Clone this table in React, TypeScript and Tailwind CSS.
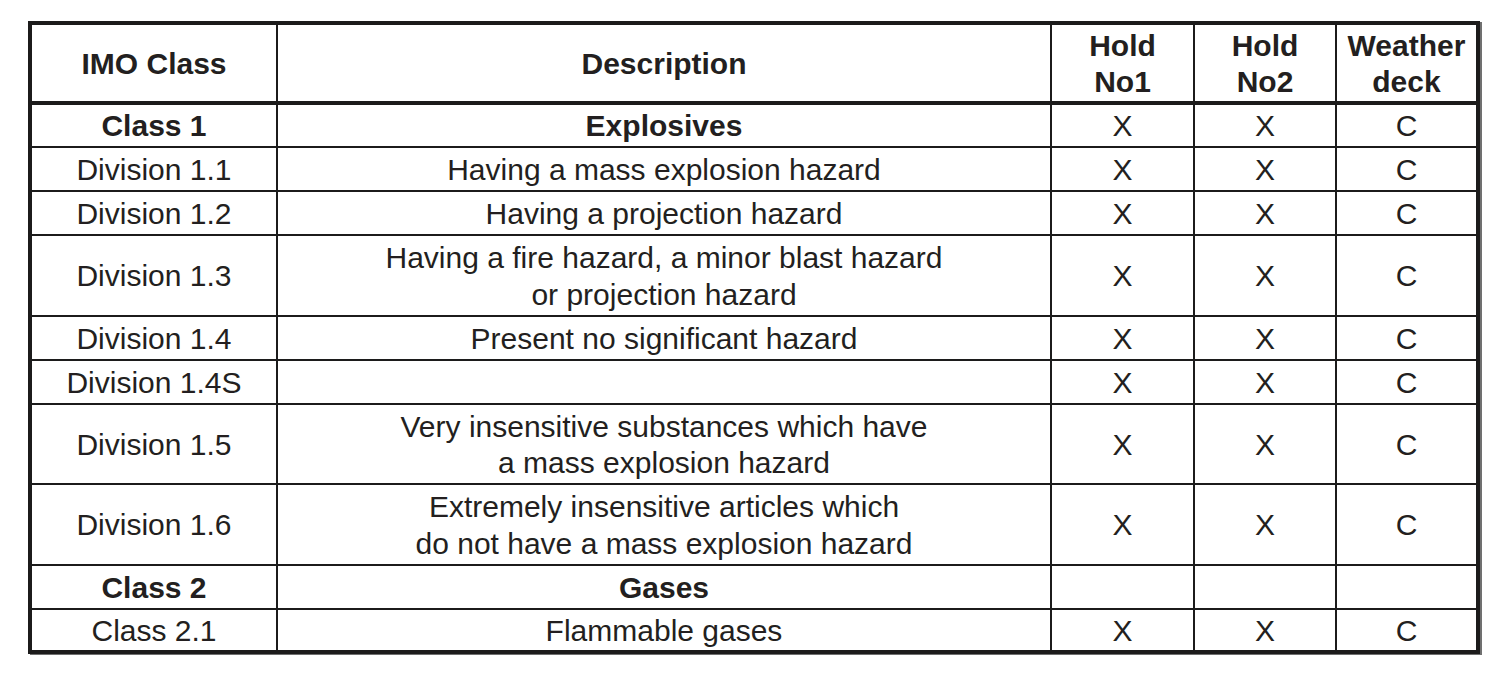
import React from "react";

type Row = { c1: string; c2: string[]; h1: string; h2: string; w: string; bold?: boolean };

const rows: Row[] = [
  { c1: "Class 1", c2: ["Explosives"], h1: "X", h2: "X", w: "C", bold: true },
  { c1: "Division 1.1", c2: ["Having a mass explosion hazard"], h1: "X", h2: "X", w: "C" },
  { c1: "Division 1.2", c2: ["Having a projection hazard"], h1: "X", h2: "X", w: "C" },
  { c1: "Division 1.3", c2: ["Having a fire hazard, a minor blast hazard", "or projection hazard"], h1: "X", h2: "X", w: "C" },
  { c1: "Division 1.4", c2: ["Present no significant hazard"], h1: "X", h2: "X", w: "C" },
  { c1: "Division 1.4S", c2: [], h1: "X", h2: "X", w: "C" },
  { c1: "Division 1.5", c2: ["Very insensitive substances which have", "a mass explosion hazard"], h1: "X", h2: "X", w: "C" },
  { c1: "Division 1.6", c2: ["Extremely insensitive articles which", "do not have a mass explosion hazard"], h1: "X", h2: "X", w: "C" },
  { c1: "Class 2", c2: ["Gases"], h1: "", h2: "", w: "", bold: true },
  { c1: "Class 2.1", c2: ["Flammable gases"], h1: "X", h2: "X", w: "C" },
];

function Cell({ children, bold }: { children?: React.ReactNode; bold?: boolean }) {
  return (
    <div
      className={`bg-white flex flex-col items-center justify-center text-center pt-[2px] leading-[36.5px] ${
        bold ? "font-bold" : "font-normal"
      }`}
    >
      {children}
    </div>
  );
}

export default function App() {
  return (
    <div
      className="min-h-[686px] w-[1500px] bg-white pt-[21px] pl-[28px] text-[30px] text-[#231f20]"
      style={{ fontFamily: '"Liberation Sans", Arial, sans-serif' }}
    >
      <div className="w-[1452px] border-4 border-[#1c1b1b] bg-[#1c1b1b] shadow-[2px_1px_0_#707070] flex flex-col">
        <div className="grid grid-cols-[244px_772px_141px_140px_139px] grid-rows-[76px] gap-x-[2px]">
          <Cell bold>IMO Class</Cell>
          <Cell bold>Description</Cell>
          <Cell bold>
            <span>Hold</span>
            <span>No1</span>
          </Cell>
          <Cell bold>
            <span>Hold</span>
            <span>No2</span>
          </Cell>
          <Cell bold>
            <span>Weather</span>
            <span>deck</span>
          </Cell>
        </div>
        <div className="mt-[4px] grid grid-cols-[244px_772px_141px_140px_139px] grid-rows-[41px_42px_42px_79px_42px_42px_78px_79px_42px_40px] gap-[2px]">
          {rows.map((r, i) => (
            <React.Fragment key={i}>
              <Cell bold={r.bold}>{r.c1}</Cell>
              <Cell bold={r.bold}>
                {r.c2.map((l, j) => (
                  <span key={j}>{l}</span>
                ))}
              </Cell>
              <Cell>{r.h1}</Cell>
              <Cell>{r.h2}</Cell>
              <Cell>{r.w}</Cell>
            </React.Fragment>
          ))}
        </div>
      </div>
    </div>
  );
}
